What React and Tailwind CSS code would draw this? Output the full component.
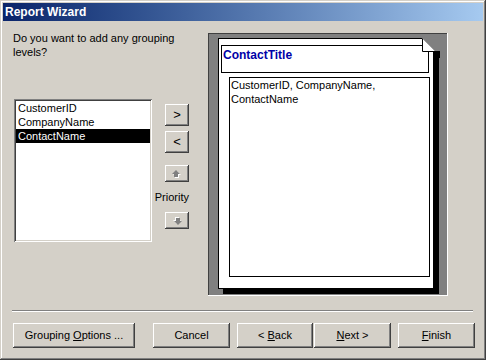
import React from 'react';

const raised =
  'shadow-[inset_-1px_-1px_#404040,inset_1px_1px_#ffffff,inset_-2px_-2px_#808080,inset_2px_2px_#d4d0c8]';
const sunken =
  'shadow-[inset_1px_1px_#808080,inset_-1px_-1px_#ffffff,inset_2px_2px_#404040,inset_-2px_-2px_#d4d0c8]';

const Btn = ({ className = '', children }) => (
  <div className={`flex items-center justify-center bg-[#d4d0c8] text-black ${raised} ${className}`}>
    {children}
  </div>
);

const Arrow = ({ down }) => (
  <svg width="10" height="8" viewBox="0 0 10 8" className={down ? 'rotate-180' : ''}>
    <polygon points="1,5 5,1 9,5 7,5 7,8 3,8 3,5" fill="#ffffff" />
    <polygon points="0,4 4,0 8,4 6,4 6,7 2,7 2,4" fill="#808080" />
  </svg>
);

export default function App() {
  const fields = ['CustomerID', 'CompanyName', 'ContactName'];

  return (
    <div
      className="w-[486px] h-[360px] bg-[#d4d0c8] p-[3px] flex flex-col text-[11px] text-black shadow-[inset_-1px_-1px_#404040,inset_1px_1px_#d4d0c8,inset_-2px_-2px_#808080,inset_2px_2px_#ffffff] overflow-hidden"
      style={{ fontFamily: '"Liberation Sans", Arial, sans-serif' }}
    >
      {/* title bar */}
      <div className="h-[18px] shrink-0 flex items-center pl-[2px] bg-gradient-to-r from-[#0a246a] to-[#a6caf0]">
        <span className="text-white font-bold text-[12px] leading-none">Report Wizard</span>
      </div>

      <div className="flex">
        {/* left column */}
        <div className="ml-[10px] w-[182px] flex flex-col">
          <p className="mt-[10px] leading-[14px]">
            Do you want to add any grouping
            <br />
            levels?
          </p>

          <div className="mt-[40px] flex">
            <div className={`ml-[1px] w-[138px] h-[143px] bg-white p-[2px] ${sunken}`}>
              {fields.map((f, i) => (
                <div
                  key={f}
                  className={`h-[14px] leading-[14px] pl-[2px] ${i === 2 ? 'bg-black text-white' : ''}`}
                >
                  {f}
                </div>
              ))}
            </div>

            <div className="ml-[13px] w-[24px] flex flex-col items-end">
              <Btn className="mt-[5px] w-[24px] h-[22px] text-[13px]">&gt;</Btn>
              <Btn className="mt-[5px] w-[24px] h-[22px] text-[13px]">&lt;</Btn>
              <Btn className="mt-[12px] w-[24px] h-[17px]">
                <Arrow />
              </Btn>
              <div className="mt-[8px] leading-[14px] whitespace-nowrap">Priority</div>
              <Btn className="mt-[8px] w-[24px] h-[17px]">
                <Arrow down />
              </Btn>
            </div>
          </div>
        </div>

        {/* preview */}
        <div className="ml-[12px] mt-[11px] w-[241px] h-[264px] bg-[#808080] p-[2px] shadow-[inset_1px_1px_#d4d0c8,inset_-1px_-1px_#ffffff,inset_2px_2px_#404040]">
          <div className="relative ml-[9px] mt-[4px] w-[216px] h-[251px] bg-white border border-black shadow-[5px_5px_0_#000]">
            <div className="ml-[2px] mt-[6px] w-[208px] h-[28px] border border-black pl-[1px] pt-[1px]">
              <span className="text-[#0000a8] font-bold text-[12px] leading-[14px]">ContactTitle</span>
            </div>
            <div className="ml-[10px] mt-[4px] w-[201px] h-[200px] border border-black pl-[1px] leading-[14px]">
              CustomerID, CompanyName,
              <br />
              ContactName
            </div>
            <svg
              width="20"
              height="20"
              viewBox="0 0 20 20"
              className="absolute top-[-1px] right-[-7px]"
            >
              <polygon points="2,0 20,0 20,18" fill="#808080" />
              <polygon points="14,13 19,13 19,18" fill="#808080" />
              <polygon points="2.5,0.5 2.5,13.5 15.5,13.5" fill="#ffffff" stroke="#000000" strokeWidth="1" />
              <line x1="2.5" y1="0.5" x2="15.5" y2="13.5" stroke="#a0a0a0" strokeWidth="1" />
              <rect x="15" y="13" width="5" height="7" fill="#000000" />
            </svg>
          </div>
        </div>
      </div>

      {/* separator */}
      <div className="ml-[9px] mt-[14px] w-[461px] h-[2px] border-t border-t-[#808080] border-b border-b-white" />

      {/* bottom buttons */}
      <div className="mt-[11px] ml-[10px] flex">
        <Btn className="w-[122px] h-[25px]">
          Grouping <span className="underline ml-[3px]">O</span>ptions ...
        </Btn>
        <Btn className="ml-[18px] w-[77px] h-[25px]">Cancel</Btn>
        <Btn className="ml-[7px] w-[76px] h-[25px]">
          &lt;&nbsp;<span className="underline">B</span>ack
        </Btn>
        <Btn className="ml-[1px] w-[77px] h-[25px]">
          <span className="underline">N</span>ext&nbsp;&gt;
        </Btn>
        <Btn className="ml-[7px] w-[77px] h-[25px]">
          <span className="underline">F</span>inish
        </Btn>
      </div>
    </div>
  );
}
